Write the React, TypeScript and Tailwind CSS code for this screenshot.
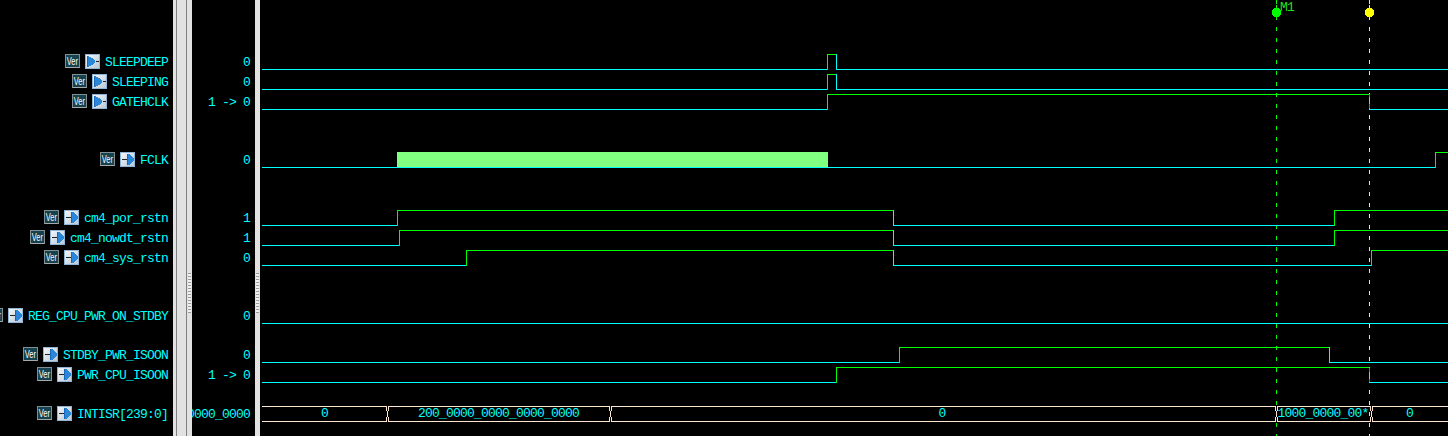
const mono = "font-['Liberation_Mono',monospace] tracking-[-0.8px]";

type Row = { name: string; value: string; out?: boolean; cls: string };
const rows: Row[] = [
  { name: "SLEEPDEEP", value: "0", out: true, cls: "mt-0" },
  { name: "SLEEPING", value: "0", out: true, cls: "mt-0" },
  { name: "GATEHCLK", value: "1 -> 0", out: true, cls: "mt-0" },
  { name: "FCLK", value: "0", cls: "mt-[38px]" },
  { name: "cm4_por_rstn", value: "1", cls: "mt-[38px]" },
  { name: "cm4_nowdt_rstn", value: "1", cls: "mt-0" },
  { name: "cm4_sys_rstn", value: "0", cls: "mt-0" },
  { name: "REG_CPU_PWR_ON_STDBY", value: "0", cls: "mt-[38px]" },
  { name: "STDBY_PWR_ISOON", value: "0", cls: "mt-[19px]" },
  { name: "PWR_CPU_ISOON", value: "1 -> 0", cls: "mt-0" },
  { name: "INTISR[239:0]", value: "0000_0000", cls: "mt-[19px]" },
];

function VerBadge() {
  return (
    <span className="mb-[2px] flex h-[14px] w-[15px] shrink-0 items-center justify-center overflow-hidden border border-[#7f8f93] border-b-[#a8a8a8] bg-[#16424f] text-white">
      <span className="scale-x-[0.68] text-[11px] font-normal leading-none tracking-normal font-['Liberation_Sans',sans-serif]">
        Ver
      </span>
    </span>
  );
}

function PortIcon({ out }: { out?: boolean }) {
  return (
    <svg width="15" height="15" viewBox="0 0 15 15" shapeRendering="crispEdges" className="mb-[2px] shrink-0">
      <defs>
        <linearGradient id="btn" x1="0" y1="0" x2="1" y2="1">
          <stop offset="0" stopColor="#f6f8fa" />
          <stop offset="1" stopColor="#b8c6d4" />
        </linearGradient>
      </defs>
      <rect x="0.5" y="0.5" width="14" height="14" fill="url(#btn)" stroke="#8fb4d8" />
      {out ? (
        <>
          <path d="M2 2h2v1h2v1h2v1h1v1h1v3H9v1H8v1H6v1H4v1H2z" fill="#2a86d8" />
          <path d="M2 2h1v11H2z" fill="#1a66b8" />
          <path d="M11 7h3v1h-3z" fill="#222" />
        </>
      ) : (
        <>
          <path d="M7 2h3v1h1v1h1v1h1v1h1v3h-1v1h-1v1h-1v1h-1v1H7z" fill="#2a86d8" />
          <path d="M7 2h1v11H7z" fill="#1a66b8" />
          <path d="M2 7h5v1H2z" fill="#222" />
        </>
      )}
    </svg>
  );
}

function Grip() {
  return <div className="h-[40px] w-[3px] bg-[repeating-linear-gradient(to_bottom,#9a9a9a_0px,#9a9a9a_1px,#f0f0f0_1px,#f0f0f0_3px)]" />;
}

const CY = "#00ffff";
const GR = "#00ff00";
const BUS = "#ffe6d0";

type Seg = [number, number, number, number, string];
function digital(low: number, high: number, xs: number[]): Seg[] {
  const out: Seg[] = [];
  let x = 262;
  let hi = false;
  for (const t of xs) {
    out.push([x, hi ? high : low, t, hi ? high : low, hi ? GR : CY]);
    out.push([t, low, t, high, hi ? CY : GR]);
    x = t;
    hi = !hi;
  }
  out.push([x, hi ? high : low, 1448, hi ? high : low, hi ? GR : CY]);
  return out;
}

const segs: Seg[] = [
  ...digital(69, 54, [827, 836]),
  ...digital(89, 74, [827, 836]),
  ...digital(109, 94, [827, 1369]),
  ...digital(167, 152, [1435]),
  ...digital(225, 210, [397, 893, 1334]),
  ...digital(245, 230, [399, 893, 1334]),
  ...digital(265, 250, [466, 893, 1371]),
  ...digital(323, 308, []),
  ...digital(362, 347, [899, 1329]),
  ...digital(382, 367, [836, 1369]),
];

const magenta: Seg[] = [
  [1369, 94, 1369, 97, "#ff00ff"],
  [1369, 104, 1369, 108, "#ff00ff"],
  [1369, 368, 1369, 372, "#ff00ff"],
  [1369, 379, 1369, 382, "#ff00ff"],
  [1276, 412, 1276, 416, "#ff00ff"],
];

function busTransition(t: number) {
  const p = (c: number, a: number, b: number) => `M${c + 0.5} ${a}V${b}`;
  return (
    <path
      key={t}
      d={[p(t - 1, 406, 411), p(t, 411, 417), p(t - 1, 417, 422), p(t + 1, 406, 411), p(t + 1, 417, 422)].join("")}
      stroke={BUS}
      fill="none"
    />
  );
}

function Wave() {
  const ts = [387, 610, 1276, 1371];
  const starts = [262, ...ts.map((t) => t + 1)];
  const ends = [...ts, 1448];
  return (
    <svg width="1448" height="436" viewBox="0 0 1448 436" shapeRendering="crispEdges" className="block">
      <path d="M1276.5 0V4M1276.5 5V436" stroke={GR} strokeDasharray="4 7" />
      <path d="M1369.5 0V4M1369.5 5V436" stroke="#ffff00" strokeDasharray="4 7" />
      <path d="M1274 8h5v1h1v1h1v5h-1v1h-1v1h-5v-1h-1v-1h-1v-5h1v-1h1z" fill={GR} />
      <path d="M1367 8h5v1h1v1h1v5h-1v1h-1v1h-5v-1h-1v-1h-1v-5h1v-1h1z" fill="#ffff00" />
      <rect x="397" y="152" width="431" height="16" fill="#80ff80" />
      {segs.map(([a, b, c, d, col], i) =>
        a === c ? (
          <path key={i} d={`M${a + 0.5} ${Math.min(b, d)}V${Math.max(b, d) + 1}`} stroke={col} fill="none" />
        ) : (
          <path key={i} d={`M${a} ${b + 0.5}H${c + 1}`} stroke={col} fill="none" />
        ),
      )}
      {magenta.map(([a, b, , d, col], i) => (
        <path key={i} d={`M${a + 0.5} ${b}V${d}`} stroke={col} />
      ))}
      {starts.map((s, i) => (
        <path key={s} d={`M${s} 406.5H${ends[i]}M${s} 421.5H${ends[i]}`} stroke={BUS} />
      ))}
      {ts.map(busTransition)}
      <g className={mono} fontSize="13" fill="#00ffff" textAnchor="middle">
        <text x="324.5" y="417">0</text>
        <text x="498.5" y="417">200_0000_0000_0000_0000</text>
        <text x="942" y="417">0</text>
        <text x="1323" y="417">1000_0000_00*</text>
        <text x="1409.5" y="417">0</text>
      </g>
      <text x="1280" y="11" fontSize="13" fill="#20e020" className={mono}>M1</text>
    </svg>
  );
}

export default function App() {
  return (
    <div className={`flex h-[436px] w-[1448px] overflow-hidden bg-black text-[13px] leading-5 text-[#00ffff] ${mono}`}>
      <div className="w-[173px] shrink-0 overflow-hidden pt-[52px]">
        {rows.map((r) => (
          <div key={r.name} className={`flex h-5 items-center justify-end gap-[5px] whitespace-nowrap pr-[5px] ${r.cls}`}>
            <VerBadge />
            <PortIcon out={r.out} />
            <span className="pt-[2px]">{r.name}</span>
          </div>
        ))}
      </div>
      <div className="flex h-full w-[19px] shrink-0 bg-[#e2e2e2]">
        <div className="w-[3px]" />
        <div className="w-[1px] bg-[#808080]" />
        <div className="w-[9px]" />
        <div className="w-[1px] bg-[#808080]" />
        <div className="w-[5px] pl-[1px] pt-[273px]">
          <Grip />
        </div>
      </div>
      <div className="w-[63px] shrink-0 overflow-hidden pt-[52px]">
        {rows.map((r) => (
          <div key={r.name} className={`flex h-5 items-center justify-end whitespace-nowrap pr-[5px] ${r.cls}`}>
            <span className="pt-[2px]">{r.value}</span>
          </div>
        ))}
      </div>
      <div className="h-full w-[5px] shrink-0 bg-[#e2e2e2] pl-[1px] pt-[273px]">
        <Grip />
      </div>
      <div className="relative flex-1 overflow-hidden">
        <div className="absolute left-[-260px] top-0">
          <Wave />
        </div>
      </div>
    </div>
  );
}
